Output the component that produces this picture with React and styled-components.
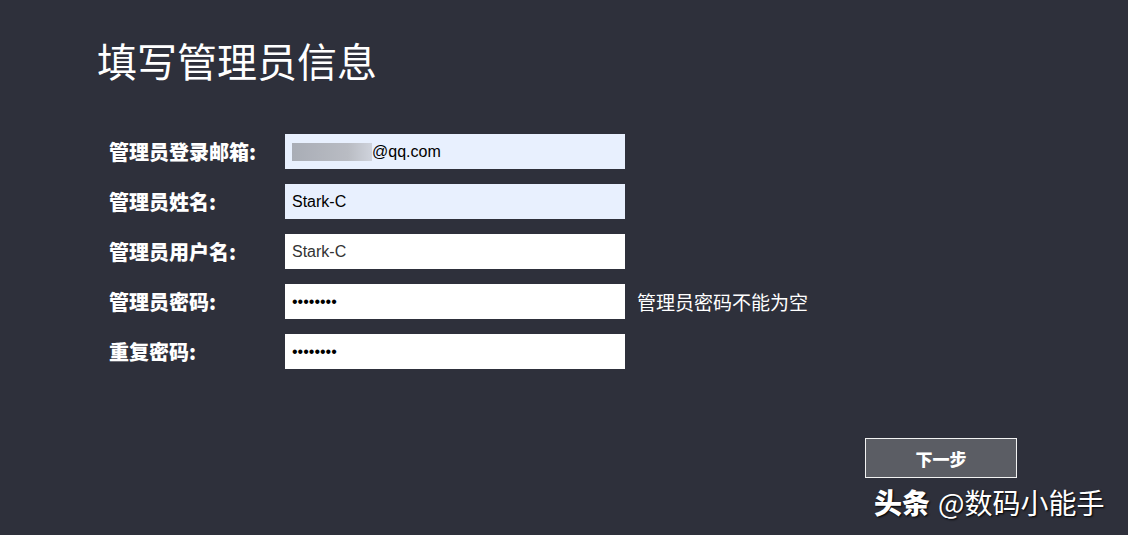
import styled, { createGlobalStyle } from "styled-components";

const Global = createGlobalStyle`
  html, body {
    margin: 0;
    padding: 0;
    background: #2e303b;
  }
  body {
    font-family: "Liberation Sans", "Noto Sans CJK SC", sans-serif;
  }
`;

const Page = styled.div`
  position: relative;
  width: 1128px;
  height: 535px;
  background: #2e303b;
  overflow: hidden;
  box-sizing: border-box;
  padding: 34px 111px 0 97px;
`;

const Title = styled.h1`
  margin: 0;
  font-family: "Noto Sans CJK SC", sans-serif;
  font-weight: 400;
  font-size: 40px;
  line-height: 52px;
  color: #fff;
`;

const Form = styled.div`
  display: grid;
  grid-template-columns: 176px 340px auto;
  row-gap: 15px;
  align-items: center;
  margin: 48px 0 0 12px;
`;

const Label = styled.div`
  font-family: "Noto Sans CJK SC", sans-serif;
  font-weight: 900;
  font-size: 20px;
  color: #fff;
`;

const Input = styled.input`
  box-sizing: border-box;
  width: 340px;
  height: 35px;
  border: none;
  outline: none;
  padding: 0 7px;
  font-family: "Liberation Sans", sans-serif;
  font-size: 16px;
  color: ${(p) => (p.$dim ? "#333" : "#000")};
  background: ${(p) => (p.$filled ? "#e8f0fe" : "#fff")};
`;

const Box = styled.div`
  box-sizing: border-box;
  width: 340px;
  height: 35px;
  display: flex;
  align-items: center;
  padding: 0 7px;
  background: #e8f0fe;
  font-family: "Liberation Sans", sans-serif;
  font-size: 16px;
  color: #000;
`;

const Blur = styled.span`
  width: 80px;
  height: 18px;
  background: linear-gradient(90deg, #a9adb6, #b9bcc3 70%, #cfd3dc);
  filter: blur(0.6px);
`;

const Hint = styled.div`
  padding-left: 12px;
  font-family: "Noto Sans CJK SC", sans-serif;
  font-size: 19px;
  color: #fff;
`;

const Footer = styled.div`
  display: flex;
  justify-content: flex-end;
  margin-top: 69px;
`;

const NextButton = styled.button`
  box-sizing: border-box;
  width: 152px;
  height: 40px;
  background: #5b5d64;
  border: 1px solid #f2f2f2;
  color: #fff;
  font-family: "Noto Sans CJK SC", sans-serif;
  font-weight: 900;
  font-size: 17px;
`;

const Watermark = styled.div`
  position: absolute;
  left: 874px;
  top: 482px;
  font-family: "Noto Sans CJK SC", sans-serif;
  font-size: 28px;
  color: #fff;
  text-shadow: 1px 1px 2px #000;
  white-space: nowrap;
  b {
    font-weight: 900;
    margin-right: 8px;
  }
`;

export default function App() {
  return (
    <>
      <Global />
      <Page>
        <Title>填写管理员信息</Title>
        <Form>
          <Label>管理员登录邮箱:</Label>
          <Box>
            <Blur />
            @qq.com
          </Box>
          <span />

          <Label>管理员姓名:</Label>
          <Input $filled defaultValue="Stark-C" />
          <span />

          <Label>管理员用户名:</Label>
          <Input $dim defaultValue="Stark-C" />
          <span />

          <Label>管理员密码:</Label>
          <Input type="password" defaultValue="12345678" />
          <Hint>管理员密码不能为空</Hint>

          <Label>重复密码:</Label>
          <Input type="password" defaultValue="12345678" />
          <span />
        </Form>
        <Footer>
          <NextButton>下一步</NextButton>
        </Footer>
        <Watermark>
          <b>头条</b>@数码小能手
        </Watermark>
      </Page>
    </>
  );
}
